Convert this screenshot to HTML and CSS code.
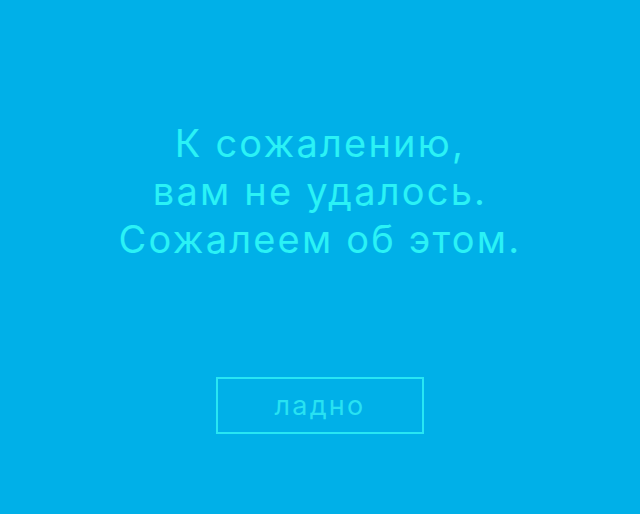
FILE: index.html
```html
<!DOCTYPE html>
<html lang="ru">
<head>
<meta charset="utf-8">
<link rel="stylesheet" href="styles.css">
</head>
<body>
<main class="screen">
  <p class="message">К сожалению,<br>вам не удалось.<br>Сожалеем об этом.</p>
  <button class="ok">ладно</button>
</main>
</body>
</html>
```
FILE: styles.css
```css
html, body {
  margin: 0;
  padding: 0;
  height: 100%;
}
body {
  background: #00b0e8;
  font-family: Inter, "Noto Sans", sans-serif;
}
.screen {
  height: 514px;
  display: flex;
  flex-direction: column;
  align-items: center;
  box-sizing: border-box;
  padding-top: 119px;
}
.message {
  margin: 0;
  color: #2af2f6;
  font-size: 38px;
  line-height: 48px;
  letter-spacing: 2.2px;
  text-align: center;
  font-weight: 400;
}
.ok {
  margin-top: 114px;
  width: 208px;
  height: 57px;
  background: transparent;
  border: 2px solid #28e6f3;
  color: #28e2f2;
  font-family: inherit;
  font-size: 27px;
  letter-spacing: 2.2px;
  padding: 0;
}
```
